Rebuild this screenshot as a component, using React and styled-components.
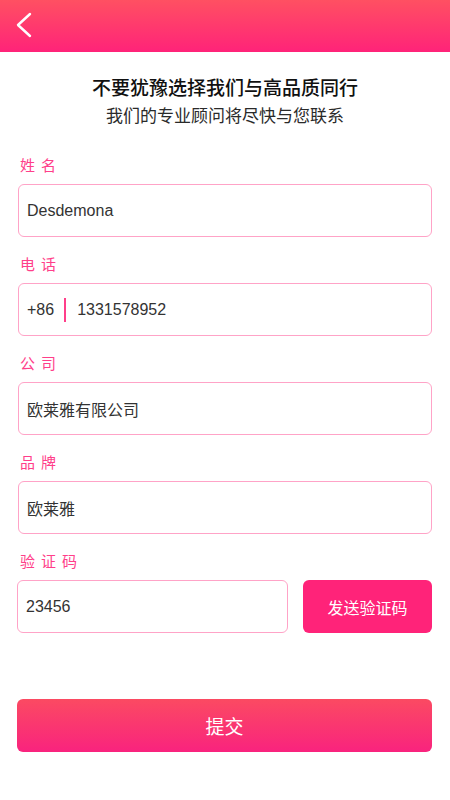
import React from "react";
import styled, { createGlobalStyle } from "styled-components";

const GlobalStyle = createGlobalStyle`
  body {
    margin: 0;
    background: #fff;
    font-family: "Liberation Sans", "Noto Sans CJK SC", sans-serif;
  }
`;

const fields = [
  { label: "姓名", value: "Desdemona" },
  { label: "电话", value: "1331578952", prefix: "+86" },
  { label: "公司", value: "欧莱雅有限公司" },
  { label: "品牌", value: "欧莱雅" },
];

const App = () => {
  return (
    <Page>
      <GlobalStyle />
      <Header>
        <BackButton aria-label="back">
          <svg width="20" height="26" viewBox="0 0 20 26" fill="none">
            <path
              d="M16 2 L4 13 L16 24"
              stroke="#fff"
              strokeWidth="2.4"
              strokeLinecap="round"
              strokeLinejoin="round"
            />
          </svg>
        </BackButton>
      </Header>
      <Content>
        <Intro>
          <Title>不要犹豫选择我们与高品质同行</Title>
          <Subtitle>我们的专业顾问将尽快与您联系</Subtitle>
        </Intro>
        {fields.map((f) => (
          <Field key={f.label}>
            <Label>{f.label}</Label>
            <InputBox>
              {f.prefix && (
                <>
                  <Prefix>{f.prefix}</Prefix>
                  <Divider />
                </>
              )}
              <Value>{f.value}</Value>
            </InputBox>
          </Field>
        ))}
        <Field>
          <Label>验证码</Label>
          <CodeRow>
            <InputBox $wide>
              <Value>23456</Value>
            </InputBox>
            <SendButton>发送验证码</SendButton>
          </CodeRow>
        </Field>
        <SubmitButton>提交</SubmitButton>
      </Content>
    </Page>
  );
};

const Page = styled.div`
  width: 450px;
  min-height: 800px;
  background: #fff;
`;

const Header = styled.div`
  height: 52px;
  display: flex;
  align-items: center;
  padding: 0 14px;
  background: linear-gradient(180deg, #ff5062 0%, #ff2379 100%);
`;

const BackButton = styled.button`
  border: 0;
  background: none;
  padding: 0;
  display: flex;
  align-items: center;
  margin-top: -2px;
`;

const Content = styled.div`
  padding: 0 18px;
`;

const Intro = styled.div`
  display: flex;
  flex-direction: column;
  align-items: center;
  gap: 4px;
  padding-top: 25px;
  margin-bottom: 27px;
`;

const Title = styled.h1`
  margin: 0;
  font-size: 19px;
  line-height: 24px;
  font-weight: 500;
  color: #111;
`;

const Subtitle = styled.h2`
  margin: 0;
  font-size: 17px;
  line-height: 24px;
  font-weight: 400;
  color: #2a2a2a;
`;

const Field = styled.div`
  display: flex;
  flex-direction: column;
  gap: 8px;
  margin-bottom: 18px;
`;

const Label = styled.span`
  font-size: 15px;
  line-height: 20px;
  color: #ff3f8a;
  letter-spacing: 6px;
  padding-left: 2px;
`;

const InputBox = styled.div`
  display: flex;
  align-items: center;
  height: 53px;
  box-sizing: border-box;
  border: 1px solid #ffa3c7;
  border-radius: 6px;
  padding: 0 8px;
  flex: ${(p) => (p.$wide ? "1" : "none")};
  ${(p) => p.$wide && "margin-left: -1px;"}
`;

const Prefix = styled.span`
  font-size: 16px;
  color: #333;
`;

const Divider = styled.span`
  width: 2px;
  height: 24px;
  background: #ff3f8a;
  margin: 0 11px 0 10px;
`;

const Value = styled.span`
  font-size: 16px;
  color: #333;
`;

const CodeRow = styled.div`
  display: flex;
  gap: 15px;
`;

const SendButton = styled.button`
  width: 129px;
  height: 53px;
  border: 0;
  border-radius: 6px;
  background: #ff2379;
  color: #fff;
  font-size: 16px;
  font-family: inherit;
`;

const SubmitButton = styled.button`
  display: block;
  width: 415px;
  height: 53px;
  margin: 66px 0 0 -1px;
  border: 0;
  border-radius: 6px;
  background: linear-gradient(180deg, #fb4a62 0%, #f9237e 100%);
  color: #fff;
  font-size: 19px;
  font-family: inherit;
`;

export default App;
